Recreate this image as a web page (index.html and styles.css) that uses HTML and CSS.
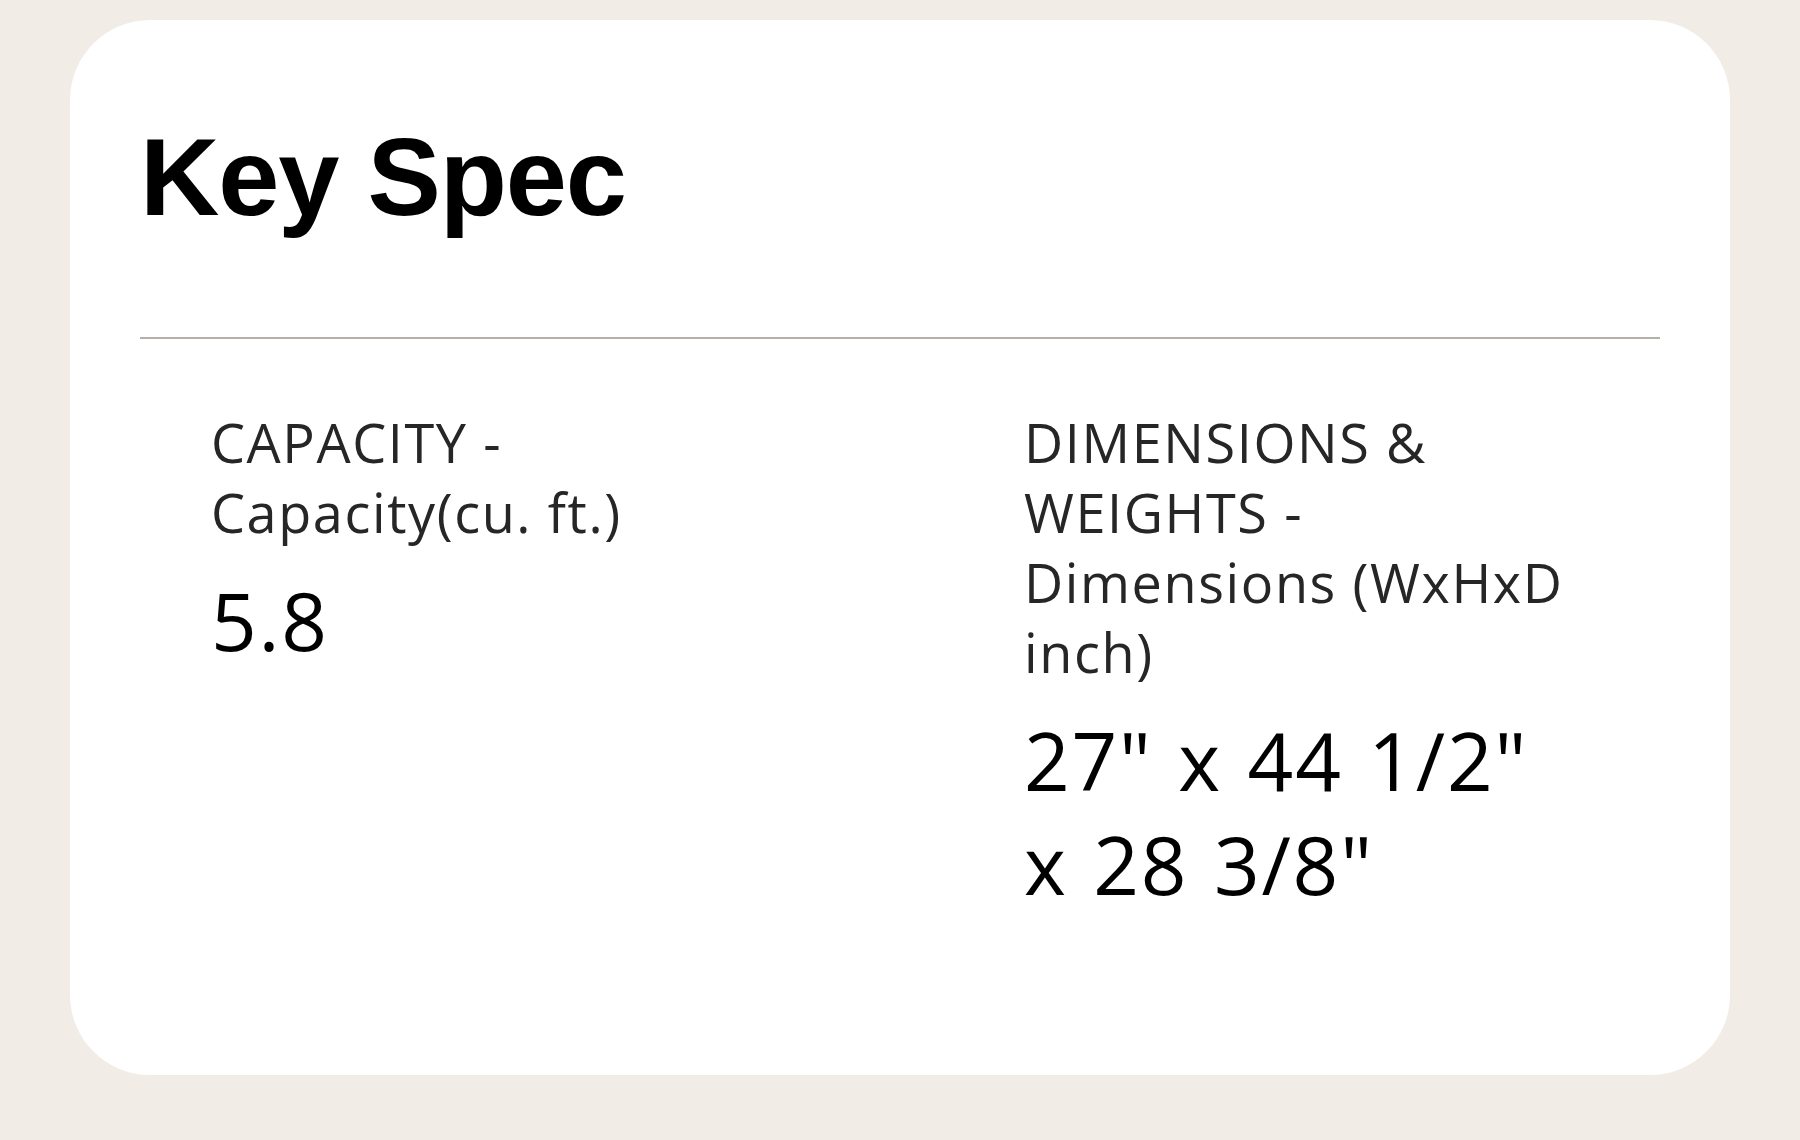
FILE: index.html
```html
<!DOCTYPE html>
<html lang="en">
<head>
<meta charset="utf-8">
<title>Key Spec</title>
<link rel="stylesheet" href="styles.css">
</head>
<body>
<section class="card">
  <h1 class="title">Key Spec</h1>
  <hr class="divider">
  <div class="specs">
    <div class="spec">
      <div class="spec-label">CAPACITY - Capacity(cu. ft.)</div>
      <div class="spec-value">5.8</div>
    </div>
    <div class="spec">
      <div class="spec-label">DIMENSIONS &amp; WEIGHTS - Dimensions (WxHxD inch)</div>
      <div class="spec-value">27" x 44 1/2" x 28 3/8"</div>
    </div>
  </div>
</section>
</body>
</html>
```

FILE: styles.css
```css
html, body {
  margin: 0;
  padding: 0;
}
body {
  background: #f1ece5;
  width: 1800px;
  height: 1140px;
  box-sizing: border-box;
  padding: 20px 70px 0 70px;
  font-family: "Open Sans", "Noto Sans", sans-serif;
}
.card {
  background: #ffffff;
  border-radius: 80px;
  height: 1055px;
  box-sizing: border-box;
  padding: 95px 70px 0 70px;
}
.title {
  margin: 0;
  font-family: "Liberation Sans", Arial, sans-serif;
  font-weight: 700;
  font-size: 110px;
  line-height: 123px;
  letter-spacing: -1.2px;
  color: #000;
}
.divider {
  margin: 99px 0 0 0;
  border: 0;
  height: 2px;
  background: #b4afa8;
}
.specs {
  display: grid;
  grid-template-columns: 545px 545px;
  column-gap: 268px;
  padding: 68px 0 0 71px;
}
.spec-label {
  font-size: 54px;
  line-height: 70px;
  letter-spacing: 1.6px;
  color: #262626;
  font-weight: 400;
}
.spec-value {
  margin-top: 21px;
  font-size: 80px;
  line-height: 104px;
  letter-spacing: 1.8px;
  word-spacing: 3px;
  color: #000;
  font-weight: 400;
}
```
